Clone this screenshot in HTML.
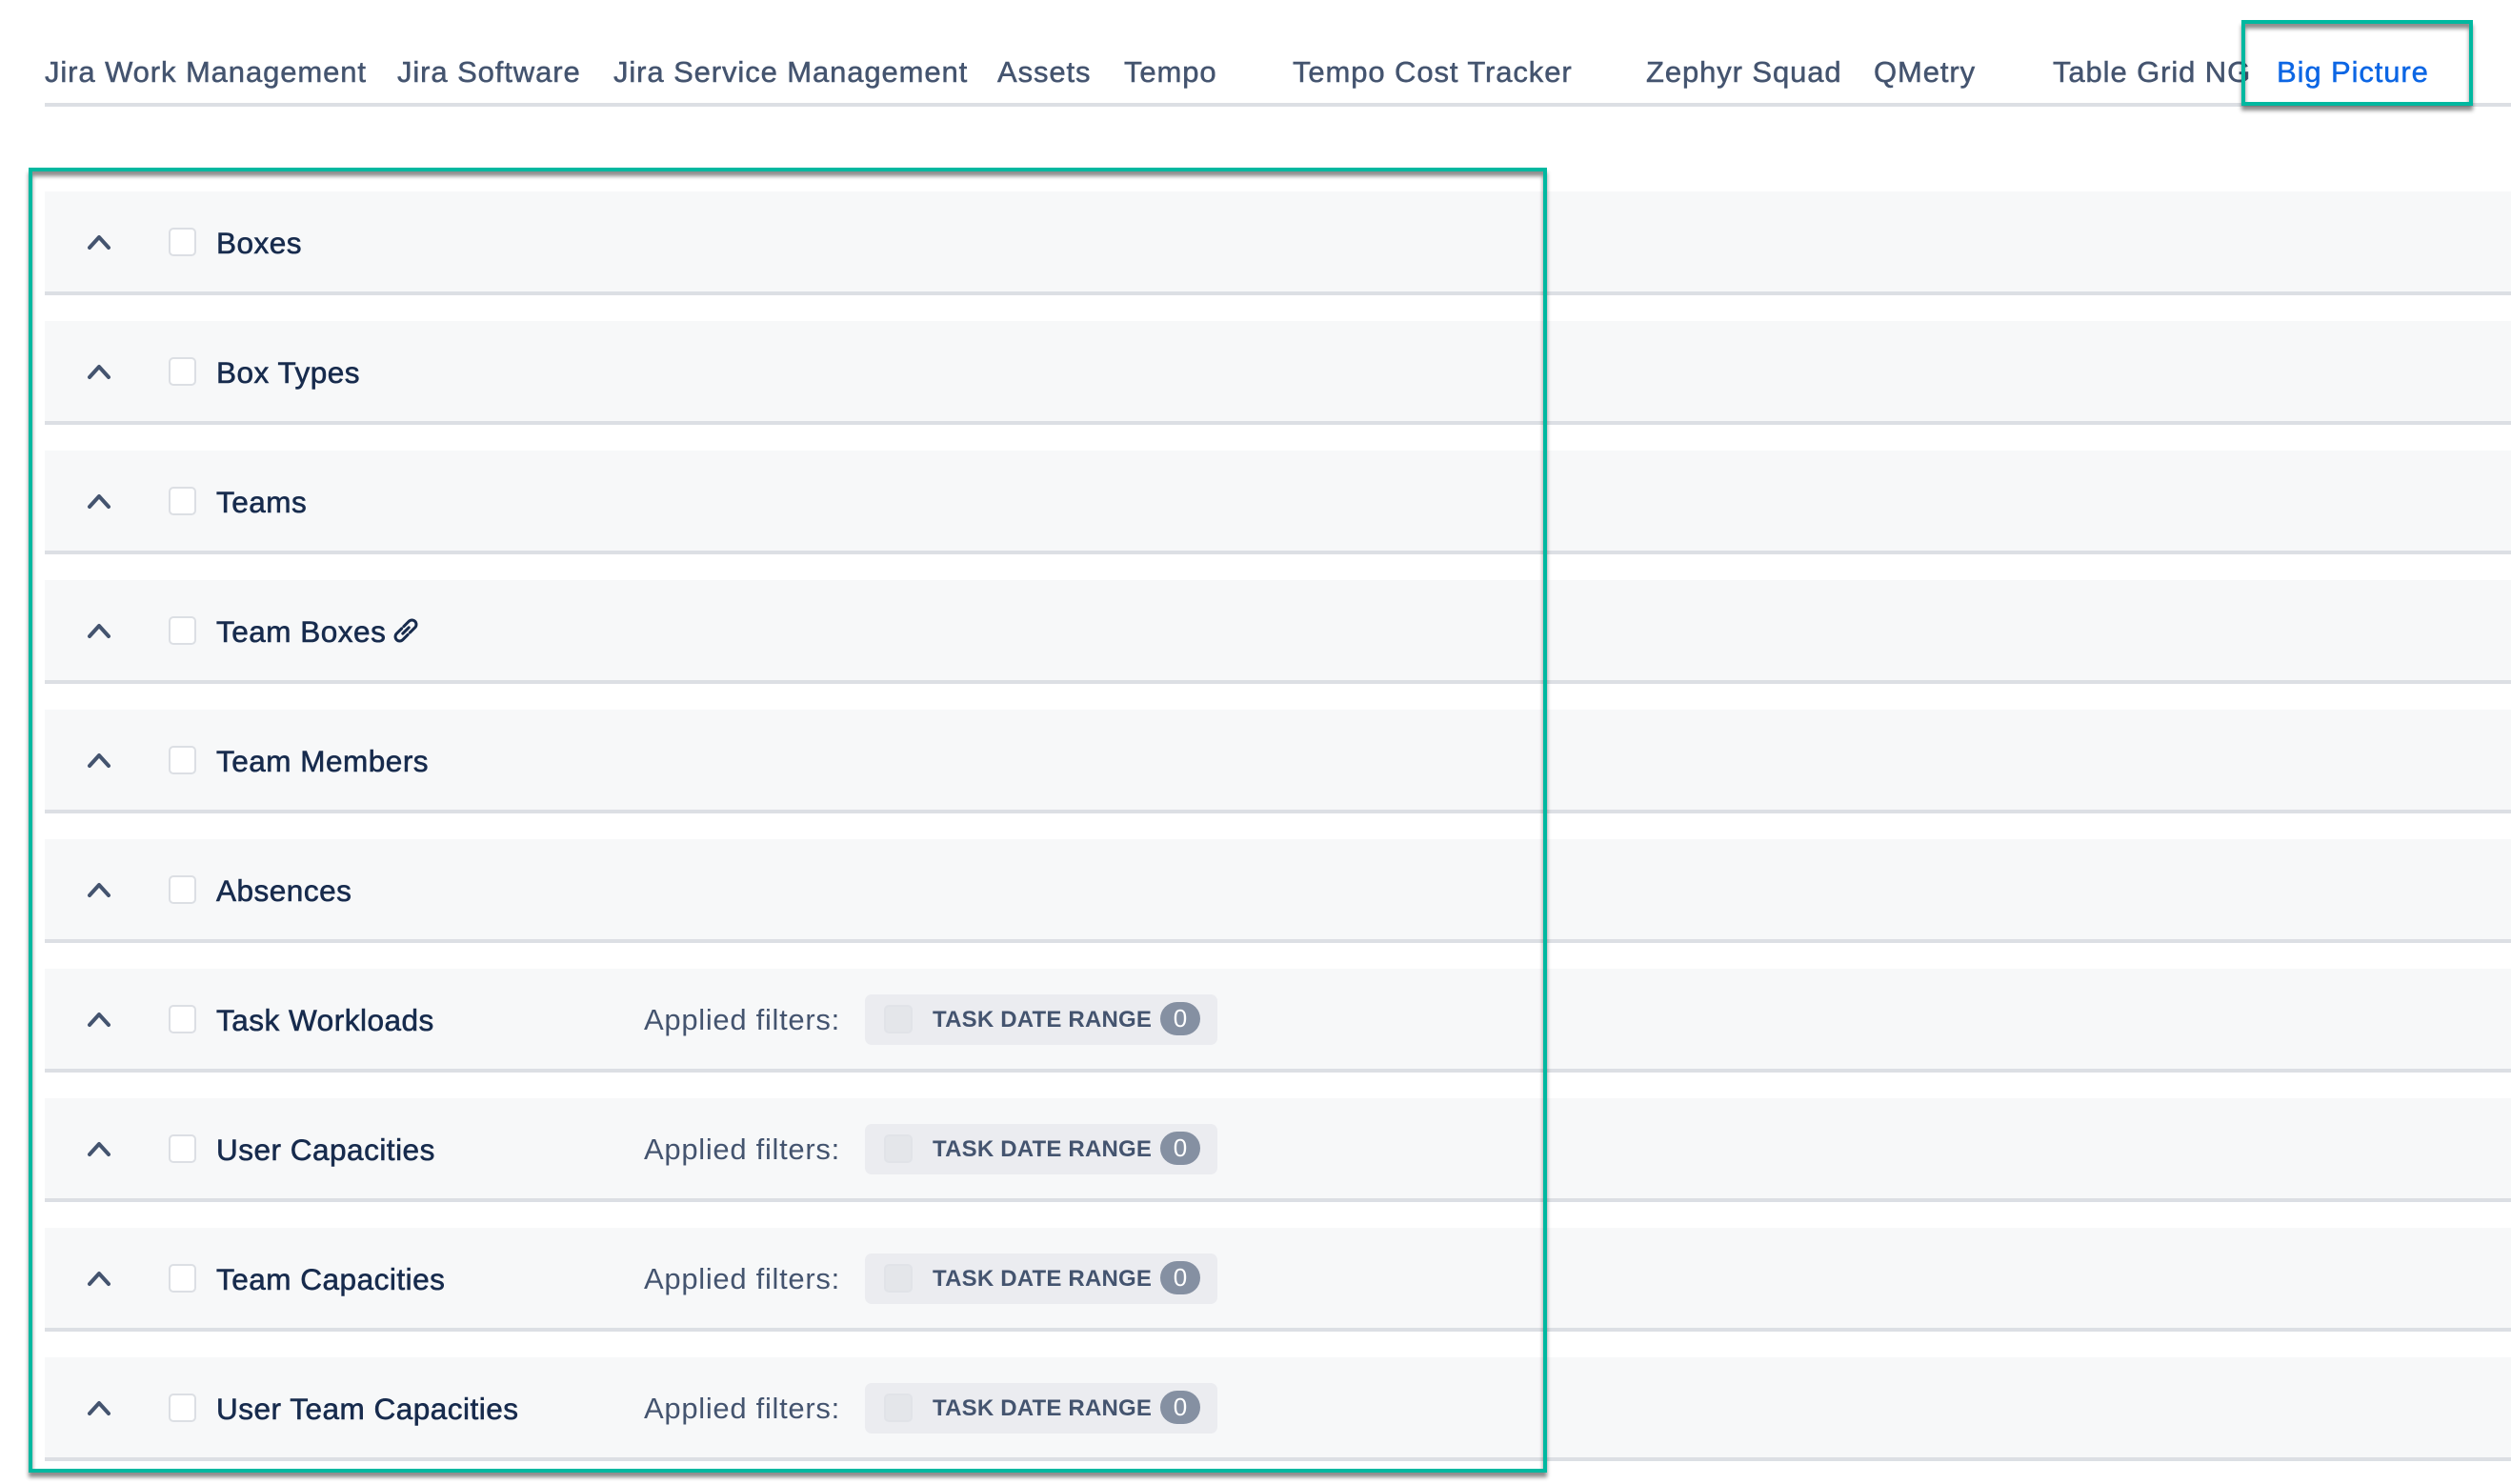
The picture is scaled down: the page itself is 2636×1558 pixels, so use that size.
<!DOCTYPE html>
<html><head><meta charset="utf-8"><style>
*{margin:0;padding:0;box-sizing:border-box}
body{width:2636px;height:1558px;background:#fff;position:relative;overflow:hidden;font-family:"Liberation Sans",sans-serif}
.tab{position:absolute;top:56px;font-size:31px;color:#44546f;line-height:40px;white-space:nowrap;letter-spacing:0.9px;-webkit-text-stroke:0.5px #44546f}
.ul{position:absolute;left:47px;right:0;top:108px;height:4px;background:#dcdfe4}
.hl{position:absolute;left:2353px;top:21px;width:243px;height:90px;border:4px solid #00b8a0;box-shadow:0 5px 4px rgba(0,0,0,.45),inset 0 5px 4px rgba(0,0,0,.45)}
.big{position:absolute;left:30px;top:176px;width:1594px;height:1370px;border:4px solid #00b8a0;box-shadow:0 5px 4px rgba(0,0,0,.45),inset 0 5px 4px rgba(0,0,0,.45);z-index:5}
.row{position:absolute;left:47px;right:0;height:109px;background:#f7f8f9;border-bottom:4px solid #dcdfe4}
.chev{position:absolute;left:44px;top:40px}
.cb{position:absolute;left:130px;top:38px;width:29px;height:30px;border:2.5px solid #dcdfe4;border-radius:5px;background:#fff}
.lbl{position:absolute;left:180px;top:34px;font-size:31.5px;color:#172b4d;line-height:40px;white-space:nowrap;letter-spacing:0.5px;-webkit-text-stroke:0.6px #172b4d}
.af{position:absolute;left:629px;top:34px;font-size:31px;color:#44546f;line-height:40px;letter-spacing:0.7px}
.chip{position:absolute;left:861px;top:27px;width:370px;height:53px;background:#ebecf0;border-radius:7px}
.chip .c2{position:absolute;left:20px;top:11px;width:30px;height:30px;background:#e4e6ea;border:2px solid #e1e3e8;border-radius:5px}
.chip .t{position:absolute;left:71px;top:12px;font-size:24px;font-weight:bold;color:#44546f;line-height:30px;white-space:nowrap;letter-spacing:0.2px}
.chip .b{position:absolute;left:310px;top:8px;width:42px;height:35px;border-radius:18px;background:#8590a2;color:#fff;font-size:26px;text-align:center;line-height:35px}
</style></head><body>
<div class="tab" style="left:47px">Jira Work Management</div>
<div class="tab" style="left:417px">Jira Software</div>
<div class="tab" style="left:644px">Jira Service Management</div>
<div class="tab" style="left:1047px">Assets</div>
<div class="tab" style="left:1180px">Tempo</div>
<div class="tab" style="left:1357px">Tempo Cost Tracker</div>
<div class="tab" style="left:1728px">Zephyr Squad</div>
<div class="tab" style="left:1967px">QMetry</div>
<div class="tab" style="left:2155px">Table Grid NG</div>
<div class="tab" style="left:2390px;color:#0c66e4;-webkit-text-stroke:0.5px #0c66e4">Big Picture</div>
<div class="ul"></div>
<div class="hl"></div>
<div class="big"></div>

<div class="row" style="top:201px"><svg class="chev" width="26" height="26" viewBox="0 0 26 26"><path d="M3 19 L13 8 L23 19" fill="none" stroke="#44546f" stroke-width="4" stroke-linecap="round" stroke-linejoin="round"/></svg><div class="cb"></div><div class="lbl">Boxes</div></div>
<div class="row" style="top:337px"><svg class="chev" width="26" height="26" viewBox="0 0 26 26"><path d="M3 19 L13 8 L23 19" fill="none" stroke="#44546f" stroke-width="4" stroke-linecap="round" stroke-linejoin="round"/></svg><div class="cb"></div><div class="lbl">Box Types</div></div>
<div class="row" style="top:473px"><svg class="chev" width="26" height="26" viewBox="0 0 26 26"><path d="M3 19 L13 8 L23 19" fill="none" stroke="#44546f" stroke-width="4" stroke-linecap="round" stroke-linejoin="round"/></svg><div class="cb"></div><div class="lbl">Teams</div></div>
<div class="row" style="top:609px"><svg class="chev" width="26" height="26" viewBox="0 0 26 26"><path d="M3 19 L13 8 L23 19" fill="none" stroke="#44546f" stroke-width="4" stroke-linecap="round" stroke-linejoin="round"/></svg><div class="cb"></div><div class="lbl">Team Boxes</div>
<svg style="position:absolute;left:364px;top:38px" width="30" height="30" viewBox="0 0 28 28"><g fill="none" stroke="#172b4d" stroke-width="2.8" stroke-linecap="round"><path d="M11 17 L17 11"/><path d="M10 12 L5 17 a4.2 4.2 0 0 0 6 6 L16 18"/><path d="M18 16 L23 11 a4.2 4.2 0 0 0 -6 -6 L12 10"/></g></svg></div>
<div class="row" style="top:745px"><svg class="chev" width="26" height="26" viewBox="0 0 26 26"><path d="M3 19 L13 8 L23 19" fill="none" stroke="#44546f" stroke-width="4" stroke-linecap="round" stroke-linejoin="round"/></svg><div class="cb"></div><div class="lbl">Team Members</div></div>
<div class="row" style="top:881px"><svg class="chev" width="26" height="26" viewBox="0 0 26 26"><path d="M3 19 L13 8 L23 19" fill="none" stroke="#44546f" stroke-width="4" stroke-linecap="round" stroke-linejoin="round"/></svg><div class="cb"></div><div class="lbl">Absences</div></div>
<div class="row" style="top:1017px"><svg class="chev" width="26" height="26" viewBox="0 0 26 26"><path d="M3 19 L13 8 L23 19" fill="none" stroke="#44546f" stroke-width="4" stroke-linecap="round" stroke-linejoin="round"/></svg><div class="cb"></div><div class="lbl">Task Workloads</div><div class="af">Applied filters:</div><div class="chip"><div class="c2"></div><div class="t">TASK DATE RANGE</div><div class="b">0</div></div></div>
<div class="row" style="top:1153px"><svg class="chev" width="26" height="26" viewBox="0 0 26 26"><path d="M3 19 L13 8 L23 19" fill="none" stroke="#44546f" stroke-width="4" stroke-linecap="round" stroke-linejoin="round"/></svg><div class="cb"></div><div class="lbl">User Capacities</div><div class="af">Applied filters:</div><div class="chip"><div class="c2"></div><div class="t">TASK DATE RANGE</div><div class="b">0</div></div></div>
<div class="row" style="top:1289px"><svg class="chev" width="26" height="26" viewBox="0 0 26 26"><path d="M3 19 L13 8 L23 19" fill="none" stroke="#44546f" stroke-width="4" stroke-linecap="round" stroke-linejoin="round"/></svg><div class="cb"></div><div class="lbl">Team Capacities</div><div class="af">Applied filters:</div><div class="chip"><div class="c2"></div><div class="t">TASK DATE RANGE</div><div class="b">0</div></div></div>
<div class="row" style="top:1425px"><svg class="chev" width="26" height="26" viewBox="0 0 26 26"><path d="M3 19 L13 8 L23 19" fill="none" stroke="#44546f" stroke-width="4" stroke-linecap="round" stroke-linejoin="round"/></svg><div class="cb"></div><div class="lbl">User Team Capacities</div><div class="af">Applied filters:</div><div class="chip"><div class="c2"></div><div class="t">TASK DATE RANGE</div><div class="b">0</div></div></div>
</body></html>
